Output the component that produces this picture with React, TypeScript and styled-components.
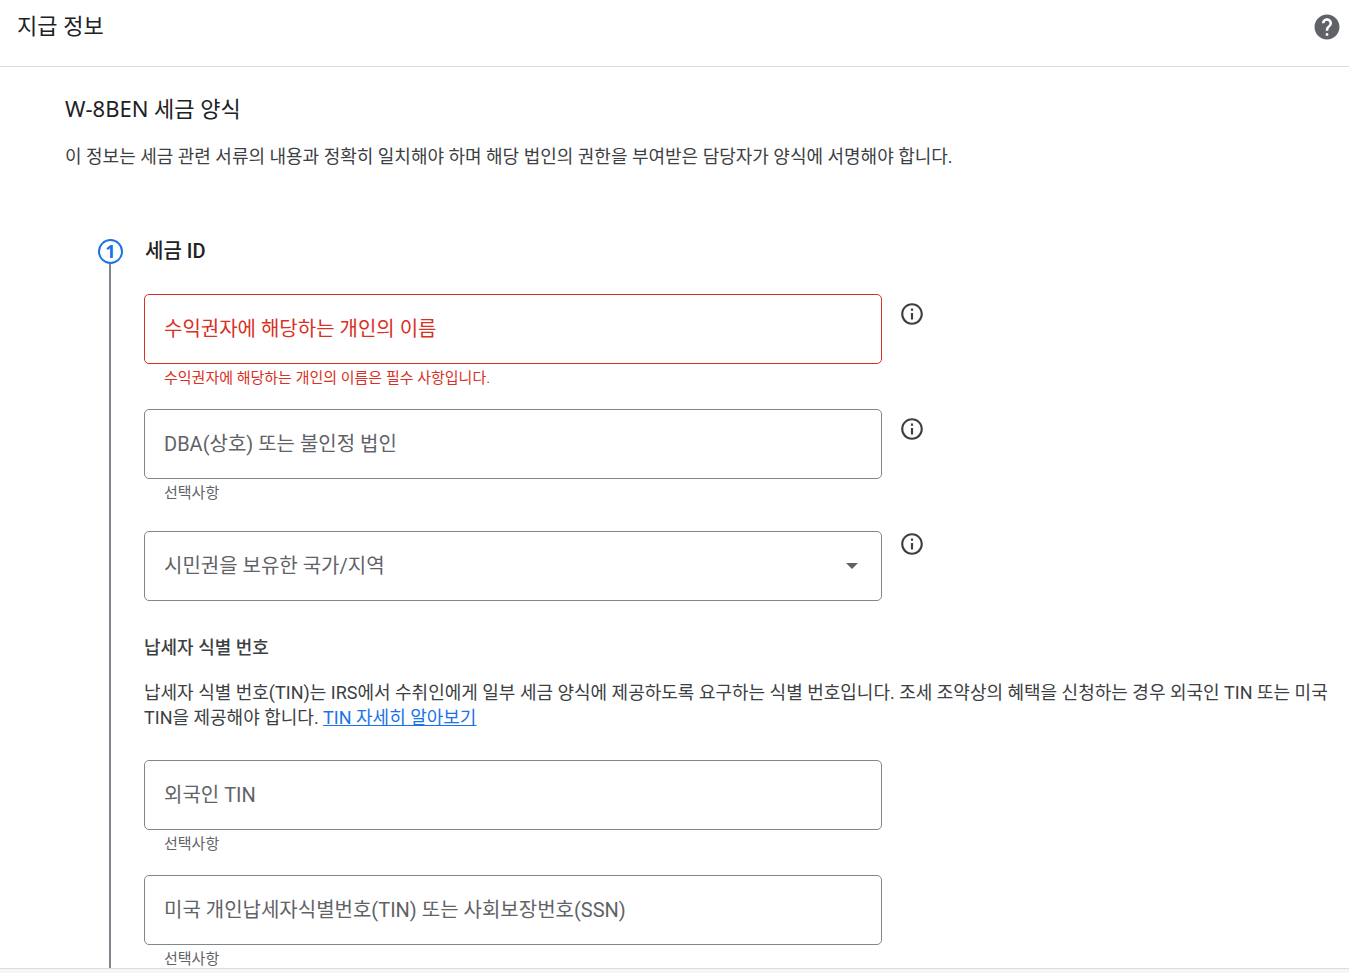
import React from "react";
import styled, { createGlobalStyle } from "styled-components";

const GlobalStyle = createGlobalStyle`
  *, *::before, *::after { box-sizing: border-box; }
  body {
    margin: 0;
    background: #fff;
    color: #3c4043;
    font-family: Roboto, "Noto Sans CJK KR", sans-serif;
    font-size: 18px;
    line-height: 25px;
    word-break: keep-all;
  }
  h1, h2, h3, h4, p { margin: 0; }
`;

const displayFont = `"Noto Sans", "Noto Sans CJK KR", sans-serif`;

const Page = styled.div`
  display: flex;
  flex-direction: column;
  height: 100vh;
`;

const Header = styled.header`
  display: flex;
  align-items: flex-start;
  justify-content: space-between;
  flex: none;
  height: 67px;
  padding: 12px 7px 0 17px;
  border-bottom: 1px solid #dadce0;
`;

const Title = styled.h1`
  font-family: ${displayFont};
  font-size: 22px;
  font-weight: 400;
  line-height: 26px;
  color: #202124;
`;

const FormTitle = styled(Title).attrs({ as: "h2" })``;

const IconButton = styled.button<{ $color: string }>`
  display: flex;
  flex: none;
  padding: 0;
  border: 0;
  background: none;
  color: ${(p) => p.$color};
  cursor: pointer;
`;

const Scroller = styled.main`
  flex: 1;
  min-height: 0;
  overflow-y: auto;
  scrollbar-width: none;
`;

const Intro = styled.section`
  display: flex;
  flex-direction: column;
  gap: 23px;
  padding: 28px 16px 0 65px;
`;

const Step = styled.section`
  display: flex;
  gap: 21px;
  margin-top: 70px;
  padding: 0 16px 0 98px;
`;

const Rail = styled.div`
  display: flex;
  flex: none;
  flex-direction: column;
  width: 25px;

  &::after {
    content: "";
    flex: 1;
    width: 2px;
    margin-left: 11px;
    background: #80868b;
  }
`;

const StepNumber = styled.span`
  display: flex;
  align-items: center;
  justify-content: center;
  width: 25px;
  height: 25px;
  border: 2px solid #1a73e8;
  border-radius: 50%;
  color: #1a73e8;
  font-family: "Noto Sans", sans-serif;
  font-size: 18px;
  font-weight: 700;
`;

const StepBody = styled.div`
  flex: 1;
  min-width: 0;
  padding-bottom: 40px;
`;

const StepTitle = styled.h3`
  margin-bottom: 30px;
  padding-left: 1px;
  font-size: 20px;
  font-weight: 500;
  color: #202124;
`;

const FieldRow = styled.div`
  display: flex;
  gap: 17px;
  margin-bottom: 20px;
`;

const Field = styled.div<{ $lower?: boolean }>`
  flex: 1;
  max-width: 738px;
  padding-top: ${(p) => (p.$lower ? "7px" : "0")};
`;

const Box = styled.div<{ $error?: boolean }>`
  display: grid;
  align-items: center;
  height: 70px;
  border: 1px solid ${(p) => (p.$error ? "#d93025" : "#80868b")};
  border-radius: 5px;
  color: ${(p) => (p.$error ? "#d93025" : "#5f6368")};

  & > * { grid-area: 1 / 1; }
`;

const Label = styled.label`
  padding: 0 19px;
  font-size: 20px;
  pointer-events: none;
`;

const Input = styled.input`
  width: 100%;
  height: 100%;
  padding: 0 19px;
  border: 0;
  outline: 0;
  background: none;
  color: #202124;
  font: inherit;
  font-size: 20px;
`;

const Select = styled.select`
  width: 100%;
  height: 100%;
  padding: 0 19px;
  border: 0;
  outline: 0;
  background: none;
  appearance: none;
  color: #202124;
  font: inherit;
  font-size: 20px;
`;

const Arrow = styled.svg`
  justify-self: end;
  margin-right: 23px;
  pointer-events: none;
`;

const Helper = styled.p<{ $error?: boolean }>`
  padding: 2px 20px 0;
  height: 25px;
  font-size: 15px;
  color: ${(p) => (p.$error ? "#d93025" : "#5f6368")};
`;

const InfoButton = styled(IconButton)`
  align-self: flex-start;
  margin-top: 7px;
`;

const Group = styled.section`
  display: flex;
  flex-direction: column;
  gap: 20px;
  margin: 34px 0 30px;
`;

const GroupTitle = styled.h4`
  font-size: 18px;
  font-weight: 500;
`;

const Link = styled.a`
  color: #1a73e8;
`;

const BottomEdge = styled.footer`
  flex: none;
  height: 5px;
  border-top: 1px solid #dadce0;
  background: #f8f7f5;
`;

function HelpIcon() {
  return (
    <svg width="30" height="30" viewBox="0 0 24 24" fill="currentColor" aria-hidden="true">
      <path d="M12 2C6.48 2 2 6.48 2 12s4.48 10 10 10 10-4.48 10-10S17.52 2 12 2zm1 17h-2v-2h2v2zm2.07-7.75l-.9.92C13.45 12.9 13 13.5 13 15h-2v-.5c0-1.1.45-2.1 1.17-2.83l1.24-1.26c.37-.36.59-.86.59-1.41 0-1.1-.9-2-2-2s-2 .9-2 2H8c0-2.21 1.79-4 4-4s4 1.79 4 4c0 .88-.36 1.68-.93 2.25z" />
    </svg>
  );
}

function InfoIcon() {
  return (
    <svg width="26" height="26" viewBox="0 0 24 24" fill="currentColor" aria-hidden="true">
      <path d="M11 7h2v2h-2zm0 4h2v6h-2zm1-9C6.48 2 2 6.48 2 12s4.48 10 10 10 10-4.48 10-10S17.52 2 12 2zm0 18c-4.41 0-8-3.59-8-8s3.59-8 8-8 8 3.59 8 8-3.59 8-8 8z" />
    </svg>
  );
}

interface TextFieldProps {
  id: string;
  label: string;
  helper: string;
  error?: boolean;
  info?: boolean;
}

function TextField({ id, label, helper, error, info }: TextFieldProps) {
  return (
    <FieldRow>
      <Field>
        <Box $error={error}>
          <Label htmlFor={id}>{label}</Label>
          <Input id={id} type="text" aria-describedby={`${id}-helper`} aria-invalid={error} />
        </Box>
        <Helper id={`${id}-helper`} $error={error}>{helper}</Helper>
      </Field>
      {info && (
        <InfoButton type="button" $color="#3c4043" aria-label={label}>
          <InfoIcon />
        </InfoButton>
      )}
    </FieldRow>
  );
}

function SelectField({ id, label }: { id: string; label: string }) {
  return (
    <FieldRow>
      <Field $lower>
        <Box>
          <Label htmlFor={id}>{label}</Label>
          <Select id={id} defaultValue="">
            <option value="" />
          </Select>
          <Arrow width="12" height="6" viewBox="0 0 12 6" aria-hidden="true">
            <path d="M0 0h12L6 6z" fill="#5f6368" />
          </Arrow>
        </Box>
      </Field>
      <InfoButton type="button" $color="#3c4043" aria-label={label}>
        <InfoIcon />
      </InfoButton>
    </FieldRow>
  );
}

export default function App() {
  return (
    <>
      <GlobalStyle />
      <Page>
        <Header>
          <Title>지급 정보</Title>
          <IconButton type="button" $color="#5f6368" aria-label="도움말">
            <HelpIcon />
          </IconButton>
        </Header>
        <Scroller>
          <Intro>
            <FormTitle>W-8BEN 세금 양식</FormTitle>
            <p>이 정보는 세금 관련 서류의 내용과 정확히 일치해야 하며 해당 법인의 권한을 부여받은 담당자가 양식에 서명해야 합니다.</p>
          </Intro>
          <Step>
            <Rail>
              <StepNumber>1</StepNumber>
            </Rail>
            <StepBody>
              <StepTitle>세금 ID</StepTitle>
              <TextField
                id="owner-name"
                label="수익권자에 해당하는 개인의 이름"
                helper="수익권자에 해당하는 개인의 이름은 필수 사항입니다."
                error
                info
              />
              <TextField id="dba" label="DBA(상호) 또는 불인정 법인" helper="선택사항" info />
              <SelectField id="country" label="시민권을 보유한 국가/지역" />
              <Group>
                <GroupTitle>납세자 식별 번호</GroupTitle>
                <p>
                  납세자 식별 번호(TIN)는 IRS에서 수취인에게 일부 세금 양식에 제공하도록 요구하는 식별 번호입니다. 조세 조약상의 혜택을 신청하는 경우 외국인 TIN 또는 미국 TIN을 제공해야 합니다.{" "}
                  <Link href="#tin">TIN 자세히 알아보기</Link>
                </p>
              </Group>
              <TextField id="foreign-tin" label="외국인 TIN" helper="선택사항" />
              <TextField id="us-tin" label="미국 개인납세자식별번호(TIN) 또는 사회보장번호(SSN)" helper="선택사항" />
            </StepBody>
          </Step>
        </Scroller>
        <BottomEdge />
      </Page>
    </>
  );
}
